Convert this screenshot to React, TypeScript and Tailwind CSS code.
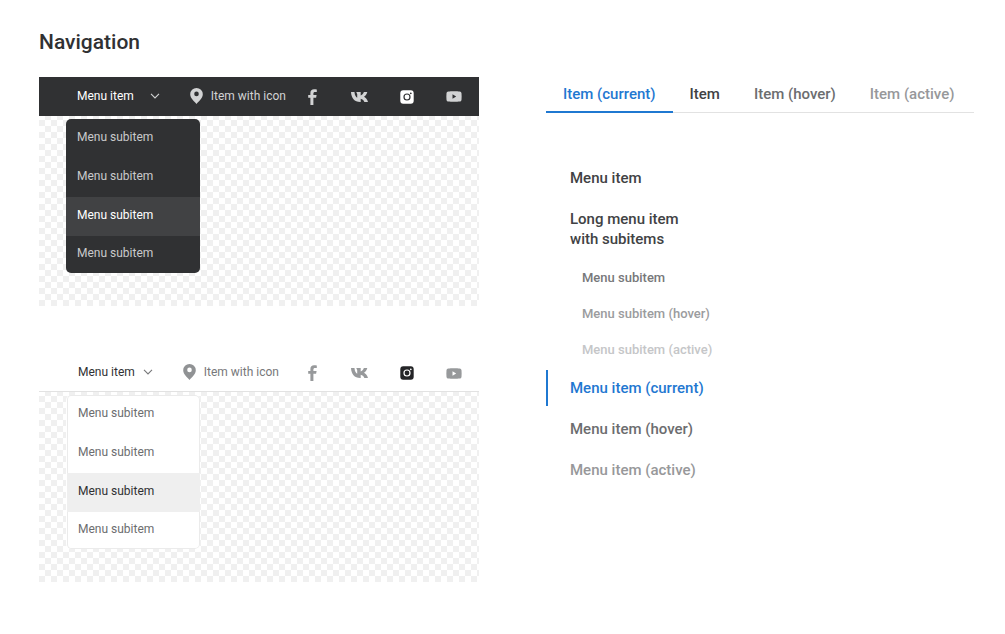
import React from "react";
import clsx from "clsx";

const SUBITEMS = ["Menu subitem", "Menu subitem", "Menu subitem", "Menu subitem"];
const HOVERED = 2;

function PinIcon() {
  return (
    <svg width="13" height="16" viewBox="0 0 13 16" fill="currentColor" aria-hidden="true">
      <path
        fillRule="evenodd"
        d="M6.5 0A6.3 6.3 0 0 0 .2 6.3C.2 10.4 4.6 13.6 6.5 16c1.9-2.4 6.3-5.6 6.3-9.7A6.3 6.3 0 0 0 6.5 0Zm0 8.2a2.3 2.3 0 1 1 0-4.6 2.3 2.3 0 0 1 0 4.6Z"
      />
    </svg>
  );
}

function ChevronIcon() {
  return (
    <svg width="10" height="6" viewBox="0 0 10 6" fill="none" stroke="currentColor" aria-hidden="true">
      <path d="M1 .9 5 4.9 9 .9" strokeWidth="1.1" />
    </svg>
  );
}

function FacebookIcon() {
  return (
    <svg width="9" height="16" viewBox="0 0 9 16" fill="currentColor" aria-hidden="true">
      <path d="M2.4 16V8.8H.2V6h2.2V3.9C2.4 1.5 3.8.2 6 .2c1 0 2 .1 2.8.2v2.5H7.1c-1.3 0-1.7.6-1.7 1.5V6h3.2l-.5 2.8H5.4V16Z" />
    </svg>
  );
}

function VkIcon() {
  return (
    <svg width="17" height="10" viewBox="0.4 5 23 14" preserveAspectRatio="none" fill="currentColor" aria-hidden="true">
      <path d="M12.8 19C5 19 .8 13.300.4 5h4.700c.3 4.400 1.900 7.300 3.700 8.200V8.200L7.500 5h6v4.900c1.800-.5 3.500-2.800 4.300-4.900h4.700c-.7 3.200-2.800 5.700-4.500 6.800 1.800.9 4.400 3.300 5.400 7.200h-4.900c-.9-2.500-2.800-4.300-5-4.700V19Z" />
    </svg>
  );
}

function InstagramIcon() {
  return (
    <svg width="14" height="14" viewBox="0 0 14 14" fill="currentColor" aria-hidden="true">
      <path
        fillRule="evenodd"
        d="M3.2.3h7.6a2.9 2.9 0 0 1 2.9 2.9v7.6a2.9 2.9 0 0 1-2.9 2.9H3.2a2.9 2.9 0 0 1-2.9-2.9V3.2A2.9 2.9 0 0 1 3.2.3ZM7 3.4a3.6 3.6 0 1 0 0 7.2 3.6 3.6 0 0 0 0-7.2Zm0 1.2a2.4 2.4 0 1 1 0 4.8 2.4 2.4 0 0 1 0-4.8Zm3.800-2.200a.9.9 0 1 0 0 1.800.9.9 0 0 0 0-1.800Z"
      />
    </svg>
  );
}

function YoutubeIcon() {
  return (
    <svg width="16" height="11" viewBox="0 0 16 11" fill="currentColor" aria-hidden="true">
      <path
        fillRule="evenodd"
        d="M2.4.4C4.6.1 11.4.1 13.6.4c1.2.1 1.8.8 1.9 1.9.2 2.2.2 4.2 0 6.4-.1 1.1-.7 1.8-1.9 1.9-2.2.3-9 .3-11.2 0C1.2 10.5.6 9.8.5 8.7.3 6.500.3 4.500.5 2.300.6 1.200 1.200.5 2.400.4ZM6.500 3.300v4.400l3.700-2.200Z"
      />
    </svg>
  );
}

const SOCIALS = [
  { name: "Facebook", Icon: FacebookIcon },
  { name: "VK", Icon: VkIcon },
  { name: "Instagram", Icon: InstagramIcon, hovered: true },
  { name: "YouTube", Icon: YoutubeIcon },
];

function NavBar({ dark = false }: { dark?: boolean }) {
  return (
    <section>
      <nav
        className={clsx(
          "flex h-[39px] items-center border-b pr-0.5 text-xs",
          dark
            ? "border-[#303133] bg-[#303133] pb-px pl-[38px] text-[#d2d3d4]"
            : "border-[#e2e2e2] bg-white pl-[39px] text-[#77787a]"
        )}
      >
        <button
          type="button"
          aria-expanded="true"
          className={clsx("flex items-center", dark ? "gap-4" : "gap-2")}
        >
          <span className={dark ? "text-white" : "text-[#303133]"}>Menu item</span>
          <ChevronIcon />
        </button>
        <a href="#" className="ml-[30px] flex items-center gap-2">
          <span className={dark ? "text-[#d2d3d4]" : "text-[#909294]"}>
            <PinIcon />
          </span>
          Item with icon
        </a>
        <div className="ml-auto flex pt-0.5">
          {SOCIALS.map(({ name, Icon, hovered }) => (
            <a
              key={name}
              href="#"
              aria-label={name}
              className={clsx(
                "flex w-[47px] items-center justify-center",
                dark ? "text-[#d2d3d4]" : "text-[#97999b]",
                hovered && (dark ? "text-white!" : "text-[#242527]!")
              )}
            >
              <Icon />
            </a>
          ))}
        </div>
      </nav>

      {/* Checkered area the dropdown opens over */}
      <div className="h-[190px] bg-[repeating-conic-gradient(#f0f0f0_0_25%,#ffffff_0_50%)] bg-[length:12px_12px] bg-[position:left_bottom] pt-[3px] pl-[27px]">
        <ul
          className={clsx(
            "w-[134px] overflow-hidden rounded-[5px] text-xs",
            dark ? "bg-[#303133] text-[#c9cacb]" : "border-l border-transparent bg-white text-[#6c6d6f] ring-1 ring-[#ebebeb] ring-inset"
          )}
        >
          {SUBITEMS.map((label, i) => (
            <li key={i}>
              <a
                href="#"
                className={clsx(
                  "flex items-center px-[11px] pb-[3px]",
                  i === SUBITEMS.length - 1 ? "h-[37px]" : "h-[39px]",
                  i === HOVERED && (dark ? "bg-[#414244] text-white" : "bg-[#efefef] text-[#303133]")
                )}
              >
                {label}
              </a>
            </li>
          ))}
        </ul>
      </div>
    </section>
  );
}

const TABS = [
  { label: "Item (current)", className: "border-b-2 border-[#1f78d1] text-[#1f78d1]" },
  { label: "Item", className: "text-[#414244]" },
  { label: "Item (hover)", className: "text-[#6c6d6f]" },
  { label: "Item (active)", className: "text-[#97989a]" },
];

function Tabs() {
  return (
    <nav className="flex h-9 border-b border-[#e2e2e2] text-[15px] font-medium">
      {TABS.map((tab) => (
        <a key={tab.label} href="#" className={clsx("-mb-px h-9 px-[17px] pt-[5px] leading-6", tab.className)}>
          {tab.label}
        </a>
      ))}
    </nav>
  );
}

function SideMenu() {
  return (
    <ul className="mt-[47px] flex flex-col gap-[5px] text-[15px] leading-5 font-medium text-[#414244]">
      <li>
        <a href="#" className="block py-2 pl-6">Menu item</a>
      </li>
      <li>
        <a href="#" className="block py-2 pl-6">
          Long menu item
          <br />
          with subitems
        </a>
        <ul className="mt-[3px] -mb-[3px] pl-9 text-[13px]">
          <li>
            <a href="#" className="block py-2 leading-5 text-[#77787a]">Menu subitem</a>
          </li>
          <li>
            <a href="#" className="block py-2 leading-5 text-[#9b9c9e]">Menu subitem (hover)</a>
          </li>
          <li>
            <a href="#" className="block py-2 leading-5 text-[#c5c6c8]">Menu subitem (active)</a>
          </li>
        </ul>
      </li>
      <li>
        <a href="#" aria-current="page" className="block border-l-2 border-[#1f78d1] py-2 pl-[22px] text-[#1f78d1]">
          Menu item (current)
        </a>
      </li>
      <li>
        <a href="#" className="block py-2 pl-6 text-[#6c6d6f]">Menu item (hover)</a>
      </li>
      <li>
        <a href="#" className="block py-2 pl-6 text-[#97989a]">Menu item (active)</a>
      </li>
    </ul>
  );
}

export default function App() {
  return (
    <div className="min-h-screen bg-white pt-7 pr-[31px] pb-12 pl-[39px] font-['Roboto',sans-serif]">
      <h1 className="text-[21px] leading-7 font-medium text-[#303133]">Navigation</h1>

      <div className="mt-[21px] grid grid-cols-[440fr_428fr] gap-[67px]">
        <div className="flex flex-col gap-[47px]">
          <NavBar dark />
          <NavBar />
        </div>
        <div>
          <Tabs />
          <SideMenu />
        </div>
      </div>
    </div>
  );
}
